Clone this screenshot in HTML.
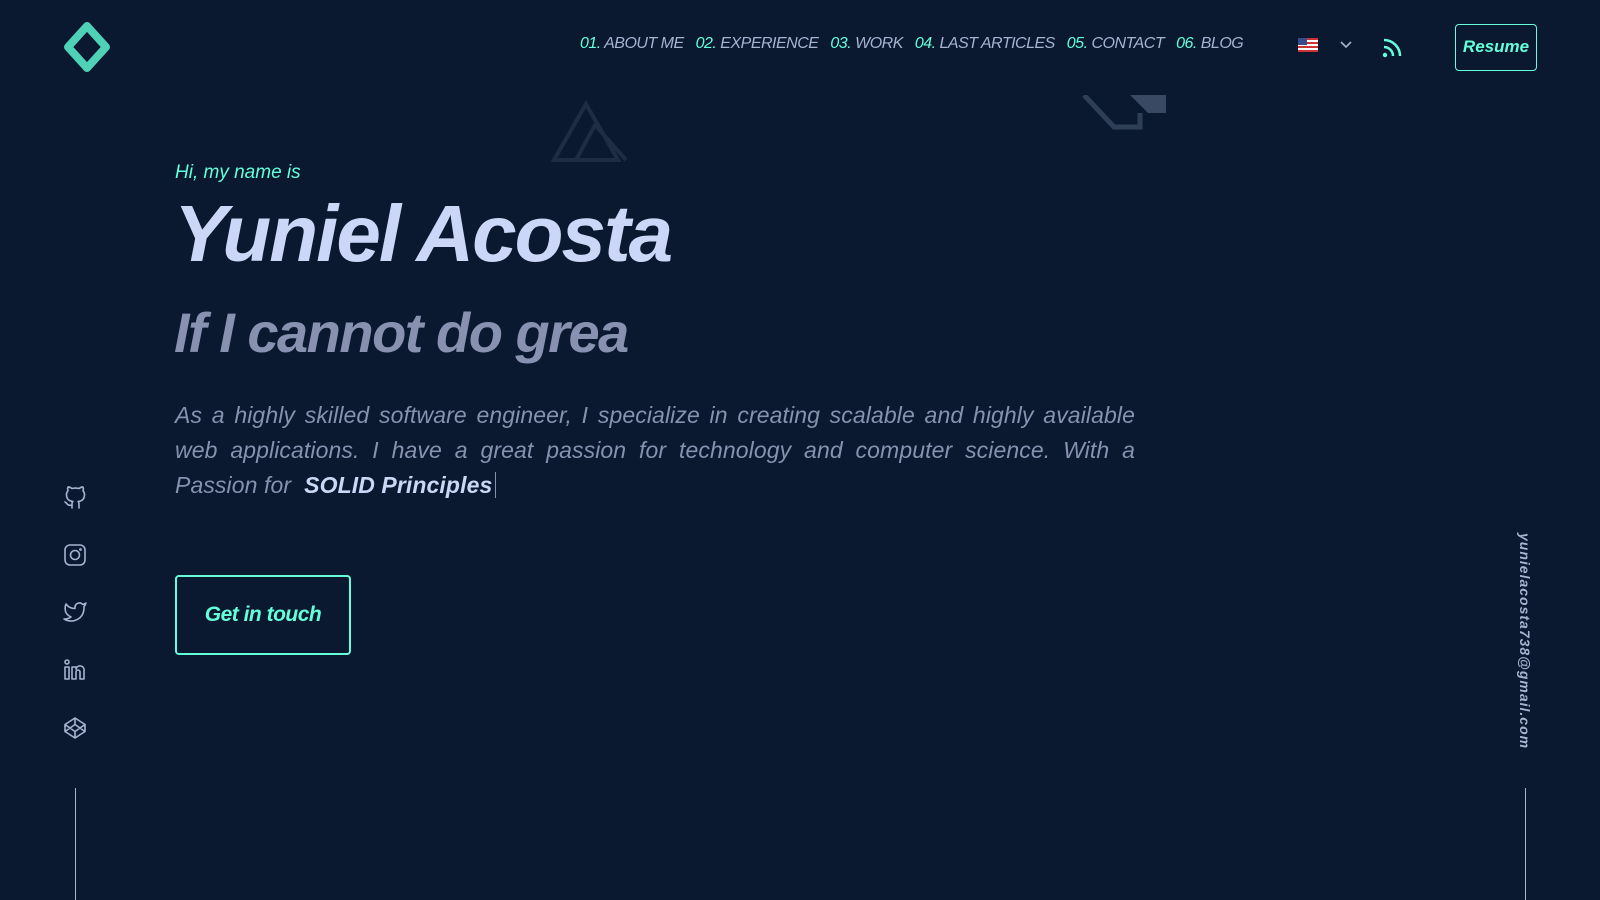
<!DOCTYPE html>
<html><head><meta charset="utf-8"><style>
*{margin:0;padding:0;box-sizing:border-box}
body{width:1600px;height:900px;background:#0a192f;overflow:hidden;position:relative;font-family:"Liberation Sans",sans-serif;font-style:italic;color:#ccd6f6}
.a{position:absolute}
nav{position:absolute;top:35px;left:580px;font-size:16px;color:#a8b2d1;letter-spacing:-0.5px;white-space:nowrap}
nav span{color:#64ffda;margin-left:8px}
nav span:first-child{margin-left:0}
.resume{left:1455px;top:24px;width:82px;height:47px;border:1.5px solid #64ffda;border-radius:4px;color:#64ffda;font-weight:bold;font-size:17px;text-align:center;line-height:44px}
.hi{left:175px;top:162px;color:#64ffda;font-size:19px}
.name{left:174px;top:188px;font-size:80px;font-weight:bold;color:#ccd6f6;letter-spacing:-2px}
.sub{left:174px;top:300px;font-size:56px;color:#8892b0;font-weight:bold;letter-spacing:-1.5px}
.p{left:175px;top:398px;width:960px;font-size:23px;line-height:35px;color:#8892b0;text-align:justify;letter-spacing:0.1px}
.p b{color:#ccd6f6}
.btn{left:175px;top:575px;width:176px;height:80px;border:2px solid #64ffda;border-radius:4px;color:#64ffda;font-size:21px;font-weight:bold;text-align:center;line-height:76px;letter-spacing:-0.5px}
.line{width:1px;background:#a8b2d1;top:788px;height:112px}
.mail{left:1517px;top:533px;writing-mode:vertical-rl;color:#a8b2d1;font-size:14px;font-weight:bold;letter-spacing:1px}
svg.i{position:absolute;left:63px;fill:none;stroke:#a8b2d1;stroke-width:1.6;stroke-linecap:round;stroke-linejoin:round}
</style></head><body>
<svg class="a" style="left:62px;top:22px" width="50" height="50" viewBox="0 0 50 50"><path d="M25 4 L44 25 L25 46 L6 25Z" fill="none" stroke="#4fd1b8" stroke-width="8" stroke-linejoin="round"/></svg>
<nav><span>01.</span> ABOUT ME <span>02.</span> EXPERIENCE <span>03.</span> WORK <span>04.</span> LAST ARTICLES <span>05.</span> CONTACT <span>06.</span> BLOG</nav>
<div class="a" style="left:1298px;top:38px;width:20px;height:14px;background:repeating-linear-gradient(#c33 0 2px,#fff 2px 4px)"><div style="width:9px;height:7px;background:#3a4b8c"></div></div>
<svg class="a" style="left:1339px;top:40px" width="14" height="10"><path d="M2 2 L7 7 L12 2" stroke="#a8b2d1" stroke-width="1.6" fill="none"/></svg>
<svg class="a" style="left:1381px;top:37px" width="22" height="22" viewBox="0 0 22 22"><circle cx="4" cy="18" r="2.2" fill="#64ffda"/><path d="M3 10a9 9 0 0 1 9 9M3 3a16 16 0 0 1 16 16" stroke="#64ffda" stroke-width="2.5" fill="none"/></svg>
<div class="a resume">Resume</div>
<svg class="a" style="left:550px;top:100px" width="85" height="62"><path d="M4 60 L36 4 L68 60Z M26 60 L45 25 L76 60" stroke="#1f2d44" stroke-width="4" fill="none"/></svg>
<svg class="a" style="left:1082px;top:95px" width="86" height="40"><path d="M2 0 L32 32 L58 32 L58 18" stroke="#2f3e57" stroke-width="5" fill="none"/><path d="M48 0 L84 0 L84 18 L66 18Z" fill="#3a4963"/></svg>
<div class="a hi">Hi, my name is</div>
<div class="a name">Yuniel Acosta</div>
<div class="a sub">If I cannot do grea</div>
<div class="a p">As a highly skilled software engineer, I specialize in creating scalable and highly available web applications. I have a great passion for technology and computer science. With a Passion for &nbsp;<b>SOLID Principles</b><span style="border-left:1px solid #8892b0;margin-left:3px"></span></div>
<div class="a btn">Get in touch</div>
<svg class="i" style="top:486px" width="24" height="24" viewBox="0 0 24 24"><path d="M9 19c-5 1.5-5-2.5-7-3m14 6v-3.9a3.4 3.4 0 0 0-.9-2.6c3.1-.3 6.4-1.5 6.4-7A5.4 5.4 0 0 0 20 4.8 5 5 0 0 0 19.9 1S18.7.6 16 2.5a13.4 13.4 0 0 0-7 0C6.3.6 5.1 1 5.1 1A5 5 0 0 0 5 4.8a5.4 5.4 0 0 0-1.5 3.7c0 5.4 3.3 6.6 6.4 7a3.4 3.4 0 0 0-.9 2.6V22"/></svg>
<svg class="i" style="top:543px" width="24" height="24" viewBox="0 0 24 24"><rect x="2" y="2" width="20" height="20" rx="5"/><circle cx="12" cy="12" r="4.5"/><circle cx="17.5" cy="6.5" r=".6"/></svg>
<svg class="i" style="top:600px" width="24" height="24" viewBox="0 0 24 24"><path d="M23 3a10.9 10.9 0 0 1-3.1 1.5 4.5 4.5 0 0 0-7.9 3v1A10.7 10.7 0 0 1 3 4s-4 9 5 13a11.6 11.6 0 0 1-7 2c9 5 20 0 20-11.5a4.5 4.5 0 0 0-.1-.8A7.7 7.7 0 0 0 23 3z"/></svg>
<svg class="i" style="top:658px" width="24" height="24" viewBox="0 0 24 24"><rect x="2" y="9" width="4" height="12"/><circle cx="4" cy="4" r="2"/><path d="M9 21V9h4v2a4 4 0 0 1 8 2v8h-4v-7a1.5 1.5 0 0 0-4 0v7z"/></svg>
<svg class="i" style="top:716px" width="24" height="24" viewBox="0 0 24 24"><path d="M12 2l10 6.5v7L12 22 2 15.5v-7z M12 22v-6.5 M22 8.5l-10 7-10-7 M2 15.5l10-7 10 7 M12 2v6.5"/></svg>
<div class="a line" style="left:75px"></div>
<div class="a line" style="left:1525px"></div>
<div class="a mail">yunielacosta738@gmail.com</div>
</body></html>
